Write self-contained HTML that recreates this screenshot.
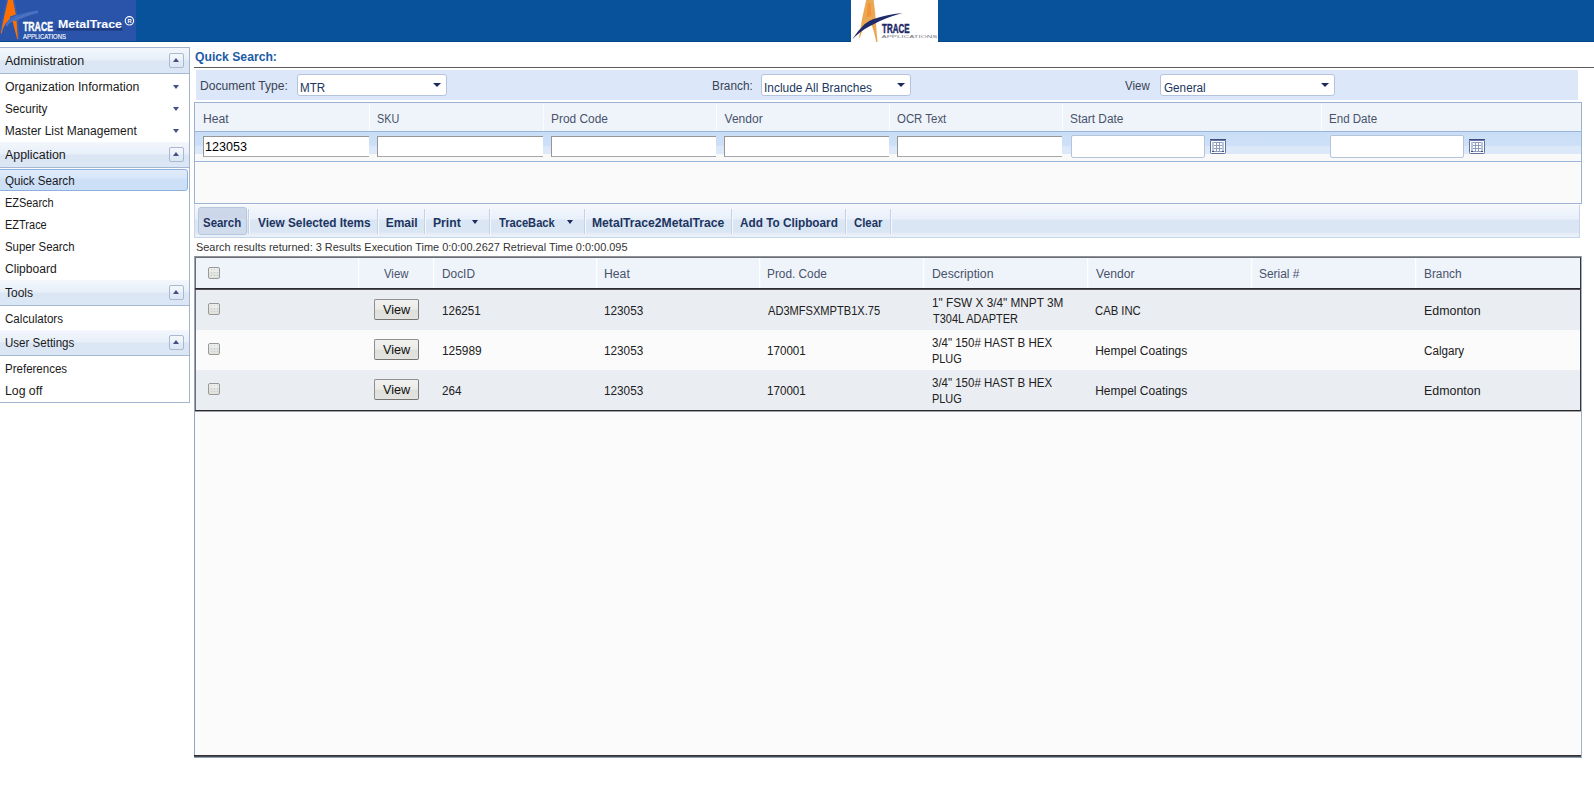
<!DOCTYPE html>
<html>
<head>
<meta charset="utf-8">
<title>MetalTrace - Quick Search</title>
<style>
*{box-sizing:border-box;}
html,body{margin:0;padding:0;}
body{width:1594px;height:791px;position:relative;overflow:hidden;background:#fff;font-family:"Liberation Sans",sans-serif;font-size:12px;color:#1e1e1e;}
.abs{position:absolute;}
#hdr{left:0;top:0;width:1594px;height:42px;background:#07529a;border-bottom:1px solid #064887;}
#logoL{left:0;top:0;width:136px;height:41px;background:#2a54aa;}
#logoC{left:851px;top:0;width:87px;height:42px;background:#fff;}
#side{left:0;top:47px;width:190px;height:356px;border-top:1px solid #a3b5ce;border-right:1px solid #a3b5ce;border-bottom:1px solid #a3b5ce;background:#fff;}
.ph{position:absolute;left:0;width:189px;height:26px;border-top:1px solid #f4f8fd;border-bottom:1px solid #a6b8d1;background:linear-gradient(#f2f6fc 0,#e7eff9 11px,#dbe6f4 12px,#dce7f5 100%);}
.ph i{position:absolute;left:169px;top:4px;width:15px;height:15px;border:1px solid #a9b9d2;border-radius:2px;background:linear-gradient(rgba(255,255,255,.35),rgba(255,255,255,.05));}
.ph i:after{content:"";position:absolute;left:3px;top:4px;border-left:3.5px solid transparent;border-right:3.5px solid transparent;border-bottom:4px solid #434f82;}
.dn{position:absolute;border-left:3.5px solid transparent;border-right:3.5px solid transparent;border-top:4px solid #434f82;}
#selitem{left:-2px;top:169px;width:190px;height:22px;border:1px solid #8fafde;border-radius:3px;background:linear-gradient(#e1ecfb 0,#d9e7fa 7px,#cde0f7 10px,#cbdff7 100%);}
#hr{left:194px;top:67px;width:1400px;height:1px;background:#5c5c5c;}
#band{left:196px;top:70px;width:1382px;height:30px;background:#dce8f9;}
.sel2{position:absolute;top:74px;height:22px;border:1px solid #b3c4dc;border-radius:3px;background:#fff;}
.dn2{position:absolute;top:83px;border-left:4px solid transparent;border-right:4px solid transparent;border-top:4px solid #1c2a5a;}
#ft{left:194px;top:102px;width:1388px;height:102px;border:1px solid #9db2d1;background:#fafafa;}
#fth{left:195px;top:103px;width:1386px;height:28px;background:radial-gradient(rgba(110,135,180,.07) .5px,transparent .8px) 0 0/6px 4px,radial-gradient(rgba(110,135,180,.07) .5px,transparent .8px) 3px 2px/6px 4px,#eff4fb;}
#fthb{left:195px;top:131px;width:1386px;height:1px;background:#9ab5da;}
.fsep{position:absolute;top:104px;width:1px;height:27px;background:#fbfcfe;}
#ftf{left:195px;top:132px;width:1386px;height:29px;background:linear-gradient(#c9def6 0,#cde0f7 14px,#dbe8f9 14px,#dde9f9 22px,#f9f9f9 22px,#f9f9f9 100%);}
#ftfb{left:195px;top:161px;width:1386px;height:1px;background:#9ab5da;}
.fi{position:absolute;top:136px;height:21px;background:#fff;border:1px solid #969696;border-right:none;border-bottom-color:#a8a8a8;}
.fd{position:absolute;top:135px;height:23px;width:134px;background:#fff;border:1px solid #b3c4dc;border-radius:2px;}
#tb{left:194px;top:204px;width:1386px;height:34px;border:1px solid #c6d5ea;border-top-color:#fbfcfe;background:linear-gradient(#f5f8fd 0,#e9f0fa 14px,#dbe6f4 15px,#dbe6f4 27px,#e7eef8 29px,#edf2f9 100%);}
#sbtn{left:198px;top:207px;width:49px;height:28px;border:1px solid #b7c6dc;border-radius:3px;background:linear-gradient(#cdd9ea 0,#cbd7e9 40%,#d1dcec 42%,#d0dbeb 100%);}
.tsep{position:absolute;top:209px;width:2px;height:25px;background:linear-gradient(90deg,#c6d3e6 50%,#f4f8fd 50%);}
#grid{left:194px;top:256px;width:1388px;height:502px;border-left:1px solid #93a6c6;border-top:1px solid #8b909b;border-right:1px solid #a3b2cc;border-bottom:1px solid #8f9db5;background:#fbfbfb;}
#gridb{left:194px;top:755px;width:1387px;height:2px;background:linear-gradient(#2f2f34 50%,#4b4b52 50%);}
#gt{left:195px;top:257px;width:1386px;height:155px;border:1px solid #6f6f73;border-right:1px solid #35353a;border-bottom:none;}
#gh{left:196px;top:258px;width:1384px;height:30px;background:radial-gradient(rgba(110,135,180,.07) .5px,transparent .8px) 0 0/6px 4px,radial-gradient(rgba(110,135,180,.07) .5px,transparent .8px) 3px 2px/6px 4px,#eff4fb;}
#ghb{left:195px;top:288px;width:1386px;height:2px;background:linear-gradient(#2c2c30 50%,#505056 50%);}
.gsep{position:absolute;top:258px;width:2px;height:30px;background:linear-gradient(90deg,#fdfeff 50%,#f3f7fc 50%);}
.gr{position:absolute;left:196px;width:1384px;height:40px;}
.gr.a{background:#eaedf2;}
.gr.b{background:#fbfbfb;}
.cb{position:absolute;left:208px;width:12px;height:12px;border:1px solid #989898;border-radius:2px;background:radial-gradient(rgba(120,150,220,.35) .6px,transparent 1px) 1px 0/3px 3px,linear-gradient(#eeeeec 0,#ebebe8 35%,#e3e3de 40%,#e3e3de 100%);}
.vb{position:absolute;left:374px;width:45px;height:21px;border:1px solid #8f8f8f;border-bottom-color:#757575;border-right-color:#7d7d7d;border-radius:2px;background:linear-gradient(#f1f1ef 0,#ebebe8 48%,#dfdfdb 54%,#e3e3df 100%);}
#gbb{left:195px;top:410px;width:1386px;height:2px;background:linear-gradient(#2a2a2e 50%,#a0a0a6 50%);}
</style>
</head>
<body>
<div id="hdr" class="abs"></div>
<div id="logoL" class="abs">
<svg width="136" height="41" viewBox="0 0 136 41" style="position:absolute;left:0;top:0">
  <g fill="none" stroke="#5c8fe0" stroke-opacity=".38" stroke-width="2.2" stroke-dasharray="1 1">
    <path d="M7.5,0 L0.6,33 M13.6,0 L17.4,21 L18.6,39"/>
  </g>
  <polygon fill="#ff6f00" points="8,0 13,0 15.8,14.6 10.2,16.4 9.6,19.4 5.6,23.6 3,28.5 1.6,33.6 0.8,33.4 4.2,16.5"/>
  <polygon fill="#ff6f00" points="12.4,20.8 16.6,20.4 17.2,30 17.9,39.2 17.2,39.2"/>
  <path d="M5.2,25.8 Q7,20.8 10.5,17.4 L16,15.2 Q27,11.6 38,10.2 L38.4,13 Q27,15.8 17,20.4 L12.2,21.4 Q9,23.2 7.4,26.6 Z" fill="#4675cb" fill-opacity=".7"/>
  <path d="M6,25 Q14,17.5 37,11.6" fill="none" stroke="#86a9e8" stroke-opacity=".5" stroke-width="1" stroke-dasharray="1 1.2"/>
  <path d="M17,19 Q26,15 34,13.2" fill="none" stroke="#b9794f" stroke-opacity=".45" stroke-width="1" stroke-dasharray="1 1.6"/>
  <text x="23" y="31" font-family="Liberation Sans, sans-serif" font-weight="bold" font-size="12.6" fill="#fff" stroke="#fff" stroke-width=".4" textLength="30" lengthAdjust="spacingAndGlyphs">TRACE</text>
  <text x="23" y="39" font-family="Liberation Sans, sans-serif" font-size="6.7" fill="#fff" stroke="#fff" stroke-width=".12" textLength="43" lengthAdjust="spacingAndGlyphs">APPLICATIONS</text>
  <rect x="56.5" y="28.2" width="66" height="2.4" fill="#18285f" fill-opacity=".6"/>
  <text x="58" y="27.8" font-family="Liberation Sans, sans-serif" font-weight="bold" font-size="10.8" fill="#fff" textLength="64" lengthAdjust="spacingAndGlyphs">MetalTrace</text>
  <circle cx="129.4" cy="20.8" r="4.2" fill="none" stroke="#fff" stroke-width="1.1"/>
  <text x="127.4" y="22.9" font-family="Liberation Sans, sans-serif" font-weight="bold" font-size="5.8" fill="#fff">R</text>
</svg>
</div>
<div id="logoC" class="abs">
<svg width="87" height="42" viewBox="0 0 87 42" style="position:absolute;left:0;top:0">
  <path d="M15.2,0 L22.6,0 Q24.4,12 25,24 Q25.8,34 26.6,42 L25.2,42 Q23,31 20.4,24.6 L12.6,27.4 Q10.6,32.5 8.7,38 L8,37.7 Q10.6,18 15.2,0 Z" fill="#e9a855"/>
  <path d="M13.4,27.2 L11.6,27.8 Q10.4,32.4 8.7,38 Q10.8,32.2 13.4,27.2 Z" fill="#fff" fill-opacity=".0"/>
  <path d="M17.2,3 L19.4,3 L20.3,15.6 L15.4,17.6 Z" fill="#ff7a1a" fill-opacity=".5"/>
  <path d="M1.2,39.2 Q7.4,30 13.5,24.2 Q17,21 22,19.2 Q34,14.8 51.5,13 Q33,18.3 22.5,24.2 Q13,29 9,32.5 Q5,35.6 1.2,39.2 Z" fill="#1f2a6a"/>
  <text x="31" y="32.6" font-family="Liberation Sans, sans-serif" font-weight="bold" font-size="13.2" fill="#1d2767" stroke="#1d2767" stroke-width=".5" textLength="27.5" lengthAdjust="spacingAndGlyphs">TRACE</text>
  <text x="30.5" y="37.8" font-family="Liberation Sans, sans-serif" font-size="3.4" fill="#7a7a84" textLength="56" lengthAdjust="spacingAndGlyphs">APPLICATIONS</text>
</svg>
</div>
<div id="side" class="abs"><div class="ph" style="top:0px"><i></i></div><div class="ph" style="top:94px"><i></i></div><div class="ph" style="top:232px"><i></i></div><div class="ph" style="top:282px"><i></i></div></div>
<div id="selitem" class="abs"></div>
<b class="dn" style="left:173px;top:85px"></b><b class="dn" style="left:173px;top:107px"></b><b class="dn" style="left:173px;top:129px"></b><span style="position:absolute;left:5.0px;top:54px;font-size:12px;line-height:14px;white-space:nowrap;color:#1a1a1a;transform:scaleX(1.040);transform-origin:0 0;">Administration</span><span style="position:absolute;left:4.7px;top:80px;font-size:12px;line-height:14px;white-space:nowrap;color:#1a1a1a;transform:scaleX(1.022);transform-origin:0 0;">Organization Information</span><span style="position:absolute;left:4.7px;top:102px;font-size:12px;line-height:14px;white-space:nowrap;color:#1a1a1a;transform:scaleX(0.979);transform-origin:0 0;">Security</span><span style="position:absolute;left:4.7px;top:124px;font-size:12px;line-height:14px;white-space:nowrap;color:#1a1a1a;">Master List Management</span><span style="position:absolute;left:5.0px;top:148px;font-size:12px;line-height:14px;white-space:nowrap;color:#1a1a1a;transform:scaleX(1.034);transform-origin:0 0;">Application</span><span style="position:absolute;left:4.7px;top:174px;font-size:12px;line-height:14px;white-space:nowrap;color:#1a1a1a;transform:scaleX(0.966);transform-origin:0 0;">Quick Search</span><span style="position:absolute;left:4.8px;top:196px;font-size:12px;line-height:14px;white-space:nowrap;color:#1a1a1a;transform:scaleX(0.910);transform-origin:0 0;">EZSearch</span><span style="position:absolute;left:4.8px;top:218px;font-size:12px;line-height:14px;white-space:nowrap;color:#1a1a1a;transform:scaleX(0.916);transform-origin:0 0;">EZTrace</span><span style="position:absolute;left:4.8px;top:240px;font-size:12px;line-height:14px;white-space:nowrap;color:#1a1a1a;transform:scaleX(0.949);transform-origin:0 0;">Super Search</span><span style="position:absolute;left:4.7px;top:262px;font-size:12px;line-height:14px;white-space:nowrap;color:#1a1a1a;transform:scaleX(1.006);transform-origin:0 0;">Clipboard</span><span style="position:absolute;left:5.0px;top:286px;font-size:12px;line-height:14px;white-space:nowrap;color:#1a1a1a;">Tools</span><span style="position:absolute;left:4.7px;top:312px;font-size:12px;line-height:14px;white-space:nowrap;color:#1a1a1a;transform:scaleX(0.966);transform-origin:0 0;">Calculators</span><span style="position:absolute;left:4.7px;top:336px;font-size:12px;line-height:14px;white-space:nowrap;color:#1a1a1a;transform:scaleX(0.962);transform-origin:0 0;">User Settings</span><span style="position:absolute;left:4.7px;top:362px;font-size:12px;line-height:14px;white-space:nowrap;color:#1a1a1a;transform:scaleX(0.960);transform-origin:0 0;">Preferences</span><span style="position:absolute;left:4.7px;top:384px;font-size:12px;line-height:14px;white-space:nowrap;color:#1a1a1a;transform:scaleX(1.022);transform-origin:0 0;">Log off</span><span style="position:absolute;left:195.4px;top:50px;font-size:12px;line-height:14px;white-space:nowrap;color:#1d5ba7;font-weight:bold;transform:scaleX(1.015);transform-origin:0 0;">Quick Search:</span><div id="hr" class="abs"></div>
<div id="band" class="abs"></div>
<span style="position:absolute;left:199.9px;top:79px;font-size:12px;line-height:14px;white-space:nowrap;color:#3a4254;transform:scaleX(1.007);transform-origin:0 0;">Document Type:</span><div class="sel2" style="left:297px;width:150px"></div><b class="dn2" style="left:433px"></b><span style="position:absolute;left:300.1px;top:81px;font-size:12px;line-height:14px;white-space:nowrap;color:#20365e;transform:scaleX(0.967);transform-origin:0 0;">MTR</span><span style="position:absolute;left:711.5px;top:79px;font-size:12px;line-height:14px;white-space:nowrap;color:#3a4254;transform:scaleX(0.985);transform-origin:0 0;">Branch:</span><div class="sel2" style="left:761px;width:150px"></div><b class="dn2" style="left:897px"></b><span style="position:absolute;left:764.2px;top:81px;font-size:12px;line-height:14px;white-space:nowrap;color:#20365e;transform:scaleX(0.993);transform-origin:0 0;">Include All Branches</span><span style="position:absolute;left:1125.4px;top:79px;font-size:12px;line-height:14px;white-space:nowrap;color:#3a4254;transform:scaleX(0.958);transform-origin:0 0;">View</span><div class="sel2" style="left:1160px;width:175px"></div><b class="dn2" style="left:1321px"></b><span style="position:absolute;left:1163.9px;top:81px;font-size:12px;line-height:14px;white-space:nowrap;color:#20365e;transform:scaleX(0.976);transform-origin:0 0;">General</span><div id="ft" class="abs"></div><div id="fth" class="abs"></div><div id="fthb" class="abs"></div><div id="ftf" class="abs"></div><div id="ftfb" class="abs"></div>
<i class="fsep" style="left:369px"></i><i class="fsep" style="left:543px"></i><i class="fsep" style="left:716px"></i><i class="fsep" style="left:889px"></i><i class="fsep" style="left:1062px"></i><i class="fsep" style="left:1321px"></i><span style="position:absolute;left:202.7px;top:112px;font-size:12px;line-height:14px;white-space:nowrap;color:#48526a;transform:scaleX(1.012);transform-origin:0 0;">Heat</span><span style="position:absolute;left:376.7px;top:112px;font-size:12px;line-height:14px;white-space:nowrap;color:#48526a;transform:scaleX(0.900);transform-origin:0 0;">SKU</span><span style="position:absolute;left:550.5px;top:112px;font-size:12px;line-height:14px;white-space:nowrap;color:#48526a;transform:scaleX(0.991);transform-origin:0 0;">Prod Code</span><span style="position:absolute;left:724.6px;top:112px;font-size:12px;line-height:14px;white-space:nowrap;color:#48526a;">Vendor</span><span style="position:absolute;left:896.5px;top:112px;font-size:12px;line-height:14px;white-space:nowrap;color:#48526a;transform:scaleX(0.951);transform-origin:0 0;">OCR Text</span><span style="position:absolute;left:1069.5px;top:112px;font-size:12px;line-height:14px;white-space:nowrap;color:#48526a;transform:scaleX(0.989);transform-origin:0 0;">Start Date</span><span style="position:absolute;left:1328.7px;top:112px;font-size:12px;line-height:14px;white-space:nowrap;color:#48526a;transform:scaleX(0.963);transform-origin:0 0;">End Date</span><div class="fi" style="left:203px;width:166px"></div><div class="fi" style="left:377px;width:166px"></div><div class="fi" style="left:551px;width:165px"></div><div class="fi" style="left:724px;width:165px"></div><div class="fi" style="left:897px;width:165px"></div><span style="position:absolute;left:205.4px;top:139px;font-size:13px;line-height:15px;white-space:nowrap;color:#000;transform:scaleX(0.967);transform-origin:0 0;">123053</span><div class="fd" style="left:1071px"></div><svg class="abs" style="left:1210px;top:139px" width="16" height="15" viewBox="0 0 16 15"><rect x="0.5" y="0.5" width="15" height="14" rx="1" fill="#fff" stroke="#5d709f"/><rect x="0" y="0" width="16" height="1" fill="#3f4d81"/><rect x="1" y="1" width="14" height="1" fill="#6676a6"/><rect x="2" y="3" width="12" height="10" fill="#8d9dbe"/><rect x="2" y="3" width="2" height="9" fill="#b9c4da"/><rect x="12" y="3" width="2" height="9" fill="#b9c4da"/><g fill="#fff"><rect x="4" y="4" width="2" height="2"/><rect x="7" y="4" width="2" height="2"/><rect x="10" y="4" width="2" height="2"/><rect x="4" y="7" width="2" height="2"/><rect x="7" y="7" width="2" height="2"/><rect x="10" y="7" width="2" height="2"/><rect x="4" y="10" width="2" height="2"/><rect x="7" y="10" width="2" height="2"/><rect x="10" y="10" width="2" height="2"/></g><rect x="2" y="12" width="2" height="1" fill="#3f4d81"/><rect x="12" y="12" width="2" height="1" fill="#3f4d81"/></svg><div class="fd" style="left:1330px"></div><svg class="abs" style="left:1469px;top:139px" width="16" height="15" viewBox="0 0 16 15"><rect x="0.5" y="0.5" width="15" height="14" rx="1" fill="#fff" stroke="#5d709f"/><rect x="0" y="0" width="16" height="1" fill="#3f4d81"/><rect x="1" y="1" width="14" height="1" fill="#6676a6"/><rect x="2" y="3" width="12" height="10" fill="#8d9dbe"/><rect x="2" y="3" width="2" height="9" fill="#b9c4da"/><rect x="12" y="3" width="2" height="9" fill="#b9c4da"/><g fill="#fff"><rect x="4" y="4" width="2" height="2"/><rect x="7" y="4" width="2" height="2"/><rect x="10" y="4" width="2" height="2"/><rect x="4" y="7" width="2" height="2"/><rect x="7" y="7" width="2" height="2"/><rect x="10" y="7" width="2" height="2"/><rect x="4" y="10" width="2" height="2"/><rect x="7" y="10" width="2" height="2"/><rect x="10" y="10" width="2" height="2"/></g><rect x="2" y="12" width="2" height="1" fill="#3f4d81"/><rect x="12" y="12" width="2" height="1" fill="#3f4d81"/></svg>
<div id="tb" class="abs"></div><div id="sbtn" class="abs"></div>
<i class="tsep" style="left:248px"></i><i class="tsep" style="left:377px"></i><i class="tsep" style="left:424px"></i><i class="tsep" style="left:489px"></i><i class="tsep" style="left:584px"></i><i class="tsep" style="left:731px"></i><i class="tsep" style="left:845px"></i><i class="tsep" style="left:890px"></i><span style="position:absolute;left:203.0px;top:216px;font-size:12px;line-height:14px;white-space:nowrap;color:#1d3460;font-weight:bold;transform:scaleX(0.954);transform-origin:0 0;">Search</span><span style="position:absolute;left:258.0px;top:216px;font-size:12px;line-height:14px;white-space:nowrap;color:#1d3460;font-weight:bold;transform:scaleX(0.984);transform-origin:0 0;">View Selected Items</span><span style="position:absolute;left:385.7px;top:216px;font-size:12px;line-height:14px;white-space:nowrap;color:#1d3460;font-weight:bold;">Email</span><span style="position:absolute;left:432.6px;top:216px;font-size:12px;line-height:14px;white-space:nowrap;color:#1d3460;font-weight:bold;transform:scaleX(1.015);transform-origin:0 0;">Print</span><span style="position:absolute;left:498.9px;top:216px;font-size:12px;line-height:14px;white-space:nowrap;color:#1d3460;font-weight:bold;transform:scaleX(0.928);transform-origin:0 0;">TraceBack</span><span style="position:absolute;left:592.1px;top:216px;font-size:12px;line-height:14px;white-space:nowrap;color:#1d3460;font-weight:bold;transform:scaleX(1.012);transform-origin:0 0;">MetalTrace2MetalTrace</span><span style="position:absolute;left:740.2px;top:216px;font-size:12px;line-height:14px;white-space:nowrap;color:#1d3460;font-weight:bold;transform:scaleX(0.981);transform-origin:0 0;">Add To Clipboard</span><span style="position:absolute;left:854.1px;top:216px;font-size:12px;line-height:14px;white-space:nowrap;color:#1d3460;font-weight:bold;transform:scaleX(0.947);transform-origin:0 0;">Clear</span><b class="dn2" style="left:472px;top:220px;border-left-width:3.5px;border-right-width:3.5px"></b><b class="dn2" style="left:567px;top:220px;border-left-width:3.5px;border-right-width:3.5px"></b><span style="position:absolute;left:196.0px;top:241px;font-size:11px;line-height:12px;white-space:nowrap;color:#333;transform:scaleX(0.994);transform-origin:0 0;">Search results returned: 3 Results Execution Time 0:0:00.2627 Retrieval Time 0:0:00.095</span>
<div id="grid" class="abs"></div><div id="gridb" class="abs"></div><div id="gt" class="abs"></div><div id="gh" class="abs"></div>
<i class="gsep" style="left:358px"></i><i class="gsep" style="left:433px"></i><i class="gsep" style="left:596px"></i><i class="gsep" style="left:759px"></i><i class="gsep" style="left:923px"></i><i class="gsep" style="left:1087px"></i><i class="gsep" style="left:1251px"></i><i class="gsep" style="left:1415px"></i><div id="ghb" class="abs"></div><i class="cb" style="top:267px"></i><span style="position:absolute;left:384.3px;top:267px;font-size:12px;line-height:14px;white-space:nowrap;color:#48526a;transform:scaleX(0.946);transform-origin:0 0;">View</span><span style="position:absolute;left:441.8px;top:267px;font-size:12px;line-height:14px;white-space:nowrap;color:#48526a;transform:scaleX(0.988);transform-origin:0 0;">DocID</span><span style="position:absolute;left:604.4px;top:267px;font-size:12px;line-height:14px;white-space:nowrap;color:#48526a;transform:scaleX(1.017);transform-origin:0 0;">Heat</span><span style="position:absolute;left:767.3px;top:267px;font-size:12px;line-height:14px;white-space:nowrap;color:#48526a;transform:scaleX(0.986);transform-origin:0 0;">Prod. Code</span><span style="position:absolute;left:931.5px;top:267px;font-size:12px;line-height:14px;white-space:nowrap;color:#48526a;transform:scaleX(1.024);transform-origin:0 0;">Description</span><span style="position:absolute;left:1096.2px;top:267px;font-size:12px;line-height:14px;white-space:nowrap;color:#48526a;transform:scaleX(1.011);transform-origin:0 0;">Vendor</span><span style="position:absolute;left:1259.2px;top:267px;font-size:12px;line-height:14px;white-space:nowrap;color:#48526a;transform:scaleX(0.995);transform-origin:0 0;">Serial #</span><span style="position:absolute;left:1423.5px;top:267px;font-size:12px;line-height:14px;white-space:nowrap;color:#48526a;transform:scaleX(0.989);transform-origin:0 0;">Branch</span>
<div class="gr a" style="top:290px"></div><i class="cb" style="top:303px"></i><div class="vb" style="top:299px"></div><span style="position:absolute;left:382.6px;top:302px;font-size:13.33px;line-height:15px;white-space:nowrap;color:#111;transform:scaleX(0.952);transform-origin:0 0;">View</span><span style="position:absolute;left:441.8px;top:304px;font-size:12px;line-height:14px;white-space:nowrap;color:#202020;transform:scaleX(0.967);transform-origin:0 0;">126251</span><span style="position:absolute;left:604.4px;top:304px;font-size:12px;line-height:14px;white-space:nowrap;color:#202020;transform:scaleX(0.979);transform-origin:0 0;">123053</span><span style="position:absolute;left:768.3px;top:304px;font-size:12px;line-height:14px;white-space:nowrap;color:#202020;transform:scaleX(0.924);transform-origin:0 0;">AD3MFSXMPTB1X.75</span><span style="position:absolute;left:931.5px;top:296px;font-size:12px;line-height:14px;white-space:nowrap;color:#202020;transform:scaleX(0.983);transform-origin:0 0;">1&quot; FSW X 3/4&quot; MNPT 3M</span><span style="position:absolute;left:932.5px;top:312px;font-size:12px;line-height:14px;white-space:nowrap;color:#202020;transform:scaleX(0.915);transform-origin:0 0;">T304L ADAPTER</span><span style="position:absolute;left:1095.3px;top:304px;font-size:12px;line-height:14px;white-space:nowrap;color:#202020;transform:scaleX(0.940);transform-origin:0 0;">CAB INC</span><span style="position:absolute;left:1423.5px;top:304px;font-size:12px;line-height:14px;white-space:nowrap;color:#202020;transform:scaleX(1.034);transform-origin:0 0;">Edmonton</span>
<div class="gr b" style="top:330px"></div><i class="cb" style="top:343px"></i><div class="vb" style="top:339px"></div><span style="position:absolute;left:382.6px;top:342px;font-size:13.33px;line-height:15px;white-space:nowrap;color:#111;transform:scaleX(0.952);transform-origin:0 0;">View</span><span style="position:absolute;left:441.8px;top:344px;font-size:12px;line-height:14px;white-space:nowrap;color:#202020;transform:scaleX(0.992);transform-origin:0 0;">125989</span><span style="position:absolute;left:604.4px;top:344px;font-size:12px;line-height:14px;white-space:nowrap;color:#202020;transform:scaleX(0.979);transform-origin:0 0;">123053</span><span style="position:absolute;left:767.3px;top:344px;font-size:12px;line-height:14px;white-space:nowrap;color:#202020;transform:scaleX(0.969);transform-origin:0 0;">170001</span><span style="position:absolute;left:931.5px;top:336px;font-size:12px;line-height:14px;white-space:nowrap;color:#202020;transform:scaleX(0.957);transform-origin:0 0;">3/4&quot; 150# HAST B HEX</span><span style="position:absolute;left:931.6px;top:352px;font-size:12px;line-height:14px;white-space:nowrap;color:#202020;transform:scaleX(0.910);transform-origin:0 0;">PLUG</span><span style="position:absolute;left:1095.2px;top:344px;font-size:12px;line-height:14px;white-space:nowrap;color:#202020;">Hempel Coatings</span><span style="position:absolute;left:1423.5px;top:344px;font-size:12px;line-height:14px;white-space:nowrap;color:#202020;transform:scaleX(0.970);transform-origin:0 0;">Calgary</span>
<div class="gr a" style="top:370px"></div><i class="cb" style="top:383px"></i><div class="vb" style="top:379px"></div><span style="position:absolute;left:382.6px;top:382px;font-size:13.33px;line-height:15px;white-space:nowrap;color:#111;transform:scaleX(0.952);transform-origin:0 0;">View</span><span style="position:absolute;left:441.8px;top:384px;font-size:12px;line-height:14px;white-space:nowrap;color:#202020;transform:scaleX(0.974);transform-origin:0 0;">264</span><span style="position:absolute;left:604.4px;top:384px;font-size:12px;line-height:14px;white-space:nowrap;color:#202020;transform:scaleX(0.979);transform-origin:0 0;">123053</span><span style="position:absolute;left:767.3px;top:384px;font-size:12px;line-height:14px;white-space:nowrap;color:#202020;transform:scaleX(0.969);transform-origin:0 0;">170001</span><span style="position:absolute;left:931.5px;top:376px;font-size:12px;line-height:14px;white-space:nowrap;color:#202020;transform:scaleX(0.957);transform-origin:0 0;">3/4&quot; 150# HAST B HEX</span><span style="position:absolute;left:931.6px;top:392px;font-size:12px;line-height:14px;white-space:nowrap;color:#202020;transform:scaleX(0.910);transform-origin:0 0;">PLUG</span><span style="position:absolute;left:1095.2px;top:384px;font-size:12px;line-height:14px;white-space:nowrap;color:#202020;">Hempel Coatings</span><span style="position:absolute;left:1423.5px;top:384px;font-size:12px;line-height:14px;white-space:nowrap;color:#202020;transform:scaleX(1.034);transform-origin:0 0;">Edmonton</span>
<div id="gbb" class="abs"></div>
</body>
</html>
